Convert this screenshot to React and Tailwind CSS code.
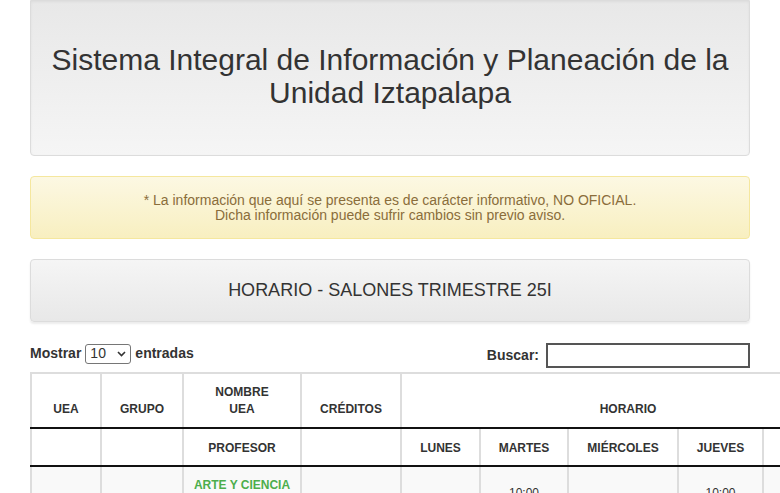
import React from 'react';

const days = ['LUNES', 'MARTES', 'MIÉRCOLES', 'JUEVES', 'VIERNES'];

const App = () => {
  return (
    <div className="w-[780px] h-[493px] overflow-hidden bg-white text-[#333] font-['Liberation_Sans',Arial,sans-serif]">
      <div className="w-[720px] ml-[30px]">
        {/* Encabezado */}
        <div className="h-[156px] border border-[#dcdcdc] rounded-b-[4px] bg-gradient-to-b from-[#e8e8e8] to-[#f5f5f5] shadow-[inset_0_1px_3px_rgba(0,0,0,0.05)] flex items-center justify-center">
          <h1 className="text-[30px] leading-[33px] text-center font-normal px-4 mb-[4px]">
            Sistema Integral de Información y Planeación de la Unidad Iztapalapa
          </h1>
        </div>

        {/* Aviso */}
        <div className="mt-[20px] h-[63px] border border-[#f5e79e] rounded-[4px] bg-gradient-to-b from-[#fcf8e3] to-[#f8efc0] flex flex-col items-center justify-center text-[14px] leading-[15px] text-[#8a6d3b] shadow-[0_1px_0_rgba(255,255,255,0.25)]">
          <p>* La información que aquí se presenta es de carácter informativo, NO OFICIAL.</p>
          <p>Dicha información puede sufrir cambios sin previo aviso.</p>
        </div>

        {/* Titulo */}
        <div className="mt-[20px] h-[63px] border border-[#dcdcdc] rounded-[4px] bg-gradient-to-b from-[#f5f5f5] to-[#e8e8e8] shadow-[0_2px_2px_rgba(0,0,0,0.08)] flex items-center justify-center">
          <h3 className="text-[18px] font-normal">HORARIO - SALONES TRIMESTRE 25I</h3>
        </div>

        {/* Controles */}
        <div className="mt-[15px] flex items-start justify-between text-[14px] font-bold">
          <div className="flex items-center gap-[4px] mt-[6px]">
            <span>Mostrar</span>
            <span className="relative inline-flex items-center w-[46px] h-[20px] border border-[#767676] rounded-[3px] bg-white font-normal text-[14px] pl-[4px]">
              10
              <svg className="absolute right-[4px] top-[6px]" width="9" height="6" viewBox="0 0 9 6">
                <path d="M1 1l3.5 3.5L8 1" fill="none" stroke="#333" strokeWidth="1.6" />
              </svg>
            </span>
            <span>entradas</span>
          </div>
          <div className="flex items-center gap-[7px] mt-[6px]">
            <span>Buscar:</span>
            <span className="block w-[204px] h-[25px] border-2 border-[#555] bg-white" />
          </div>
        </div>
      </div>

      {/* Tabla */}
      <table className="mt-[4px] ml-[30px] border-collapse text-[12px] font-bold text-[#333] table-fixed w-[824px]">
        <colgroup>
          <col className="w-[70px]" />
          <col className="w-[82px]" />
          <col className="w-[118px]" />
          <col className="w-[100px]" />
          <col className="w-[79px]" />
          <col className="w-[88px]" />
          <col className="w-[110px]" />
          <col className="w-[85px]" />
          <col className="w-[92px]" />
        </colgroup>
        <thead>
          <tr className="h-[55px] align-bottom leading-[17px]">
            <th className="border-2 border-[#ddd] border-b-[#111] pb-[9px]">UEA</th>
            <th className="border-2 border-[#ddd] border-b-[#111] pb-[9px]">GRUPO</th>
            <th className="border-2 border-[#ddd] border-b-[#111] pb-[9px]">NOMBRE<br />UEA</th>
            <th className="border-2 border-[#ddd] border-b-[#111] pb-[9px]">CRÉDITOS</th>
            <th colSpan={5} className="border-2 border-[#ddd] border-b-[#111] pb-[9px]">HORARIO</th>
          </tr>
          <tr className="h-[38px]">
            <th className="border-2 border-[#ddd] border-b-[#111] pt-[2px]" />
            <th className="border-2 border-[#ddd] border-b-[#111] pt-[2px]" />
            <th className="border-2 border-[#ddd] border-b-[#111] pt-[2px]">PROFESOR</th>
            <th className="border-2 border-[#ddd] border-b-[#111] pt-[2px]" />
            {days.map((d) => (
              <th key={d} className="border-2 border-[#ddd] border-b-[#111] pt-[2px]">{d}</th>
            ))}
          </tr>
        </thead>
        <tbody>
          <tr className="bg-[#f9f9f9] h-[60px] align-top">
            <td className="border-2 border-[#ddd]" />
            <td className="border-2 border-[#ddd]" />
            <td className="border-2 border-[#ddd] text-center text-[#4cae4c] pt-[9px]">ARTE Y CIENCIA</td>
            <td className="border-2 border-[#ddd]" />
            <td className="border-2 border-[#ddd]" />
            <td className="border-2 border-[#ddd] text-center font-normal pt-[17px]">10:00</td>
            <td className="border-2 border-[#ddd]" />
            <td className="border-2 border-[#ddd] text-center font-normal pt-[17px]">10:00</td>
            <td className="border-2 border-[#ddd]" />
          </tr>
        </tbody>
      </table>
    </div>
  );
};

export default App;
